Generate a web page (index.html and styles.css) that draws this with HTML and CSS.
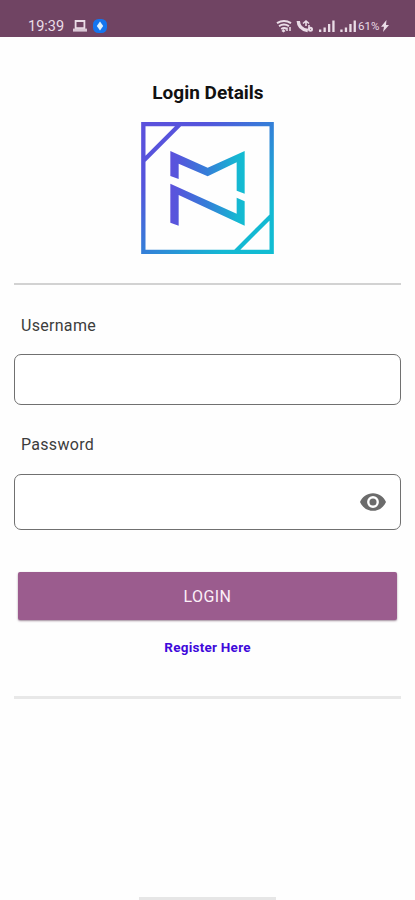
FILE: index.html
```html
<!DOCTYPE html>
<html lang="en">
<head>
<meta charset="utf-8">
<meta name="viewport" content="width=device-width, initial-scale=1">
<title>Login Details</title>
<link rel="stylesheet" href="styles.css">
</head>
<body>
<div class="screen">
  <header class="status">
    <div class="status-left">
      <span class="clock">19:39</span>
      <svg class="laptop" viewBox="0 0 14 12"><path d="M2.6 1h8.8v7.2H2.6z" fill="none" stroke="#eadde7" stroke-width="1.8"/><path d="M0 8.600h14v3H0z" fill="#d9c7d5"/></svg>
      <svg class="app" viewBox="0 0 14 14"><rect width="14" height="14" rx="5.5" fill="#1475ef"/><path d="M7 2.500l3.200 4.500L7 11.500 3.800 7z" fill="#dcf1ff"/></svg>
    </div>
    <div class="status-right">
      <svg class="signals" viewBox="0 0 82 14">
        <g fill="none" stroke="#eadde7" stroke-width="2">
          <path d="M1 4.200q7-4.600 14 0M3 7.200q5-3.200 10 0M5.200 10q3-2 5.500 0"/>
          <path d="M11 8.500v3.500m3-4v4" stroke-width="1.500"/>
          <path d="M22.300 2q.2 8 9.500 9.500" stroke-width="3.400"/>
          <path d="M27 4.500l3-2.500 3 2.500M30 2v5M33 6v4" stroke-width="1.600"/>
          <circle cx="34.500" cy="10.300" r="1.500"/>
        </g>
        <g fill="#eadde7"><path d="M7.500 10l2 2-2 1.500L5.500 12z"/>
          <path d="M43 10.500h2.300V13H43zM47.500 8.500h2.300V13h-2.300zM52 5h2.300v8H52zM56.300 1.500h2.300V13h-2.300zM64.300 10.500h2.300V13h-2.300zM68.800 8.500h2.300V13h-2.300zM73.300 5h2.300v8h-2.300zM77.600 1.500h2.300V13h-2.300z"/>
        </g>
      </svg>
      <span class="battery">61%</span>
      <svg class="bolt" viewBox="0 0 8 12"><path d="M5.500 0L0 6.800h3L2 12l6-7H5z" fill="#eadde7"/></svg>
    </div>
  </header>
  <main class="content">
    <h1 class="title">Login Details</h1>
    <svg class="logo" viewBox="35 155 397 396">
      <defs><linearGradient id="g" gradientUnits="userSpaceOnUse" x1="122" y1="0" x2="345" y2="0"><stop offset="0" stop-color="#5d52dc"/><stop offset=".12" stop-color="#5457dc"/><stop offset=".5" stop-color="#347fd8"/><stop offset=".9" stop-color="#16b7d2"/><stop offset="1" stop-color="#12bcd2"/></linearGradient>
      <linearGradient id="f" gradientUnits="userSpaceOnUse" x1="35" y1="155" x2="432" y2="551"><stop offset="0" stop-color="#5c50dc"/><stop offset=".25" stop-color="#5455dc"/><stop offset=".5" stop-color="#347fd8"/><stop offset=".8" stop-color="#14b8d3"/><stop offset="1" stop-color="#10bdd2"/></linearGradient></defs>
      <path d="M41 161h385v384H41zM43 270L151 162M317 544L425 436" fill="none" stroke="url(#f)" stroke-width="13"/>
      <path d="M122 242L234 292 345 242V370L321 361V276L234 318 147 280V326L122 317zM122 340L321 430V382L345 393V466L147 374V466L122 457z" fill="url(#g)"/>
    </svg>
    <hr class="rule">
    <form class="form">
      <label class="label" for="user">Username</label>
      <div class="field"><input id="user" type="text"></div>
      <label class="label second" for="pass">Password</label>
      <div class="field tall"><input id="pass" type="password">
        <svg class="eye" viewBox="1 4.500 22 15"><path fill="#6b6b6b" d="M12 4.500C7 4.500 2.730 7.610 1 12c1.730 4.390 6 7.500 11 7.500s9.270-3.110 11-7.500c-1.730-4.390-6-7.500-11-7.500zM12 17a5 5 0 1 1 0-10 5 5 0 0 1 0 10zm0-8a3 3 0 1 0 0 6 3 3 0 0 0 0-6z"/></svg>
      </div>
      <button class="login" type="button">LOGIN</button>
    </form>
    <a class="register" href="#">Register Here</a>
    <hr class="rule bottom">
  </main>
  <div class="handle"></div>
</div>
</body>
</html>
```
FILE: styles.css
```css
* { box-sizing: border-box; }
body { margin: 0; background: #fefefe; font-family: Roboto, sans-serif; }
.screen { height: 900px; display: flex; flex-direction: column; overflow: hidden; }
.status {
  height: 37px; flex: none; background: #704463; color: #eadde7;
  display: flex; justify-content: space-between; padding: 19px 26px 0 28px;
}
.status-left, .status-right { display: flex; align-items: center; height: 14px; }
.clock { font-size: 14.5px; line-height: 14px; width: 45px; padding-top: 1px; white-space: nowrap; }
.laptop { width: 14px; height: 12px; }
.app { width: 14px; height: 14px; margin-left: 6px; }
.signals { width: 82px; height: 14px; }
.battery { font-size: 11.5px; line-height: 14px; width: 23px; white-space: nowrap; }
.bolt { width: 8px; height: 12px; }
.content { flex: 1; display: flex; flex-direction: column; align-items: center; padding: 44px 14px 0 14px; }
.title { margin: 0; font-size: 19px; line-height: 24px; font-weight: 700; padding-left: 1px; color: #111; }
.logo { width: 133px; height: 132px; margin-top: 17px; flex: none; }
.rule { width: 100%; height: 2px; margin: 29px 0 0; border: 0; background: #d2d2d2; }
.form { width: 100%; display: flex; flex-direction: column; }
.label { margin: 31px 0 0 7px; font-size: 16px; line-height: 20px; letter-spacing: .3px; color: #3c3c3c; }
.second { margin-top: 30px; }
.field { height: 51px; margin-top: 18px; border: 1px solid #707070; border-radius: 7px; display: flex; align-items: center; padding-right: 14px; background: #fff; }
.field input { flex: 1; min-width: 0; border: 0; outline: 0; background: none; font: 16px Roboto, sans-serif; padding: 0 12px; }
.tall { height: 56px; margin-top: 19px; }
.eye { width: 26px; height: 18px; }
.login { height: 48px; margin: 42px 4px 0; border: 0; border-radius: 2px; background: #9b5c8e; color: #fbeff8; font: 16px Roboto, sans-serif; letter-spacing: .4px; padding: 0; box-shadow: 0 1px 2px rgba(70, 30, 60, .5); }
.register { margin-top: 17px; font-size: 13.5px; line-height: 20px; font-weight: 700; letter-spacing: .25px; color: #3f09db; text-decoration: none; }
.bottom { height: 3px; margin-top: 39px; background: #e8e8e8; }
.handle { width: 137px; height: 3px; background: #e6e6e6; align-self: center; }
```
